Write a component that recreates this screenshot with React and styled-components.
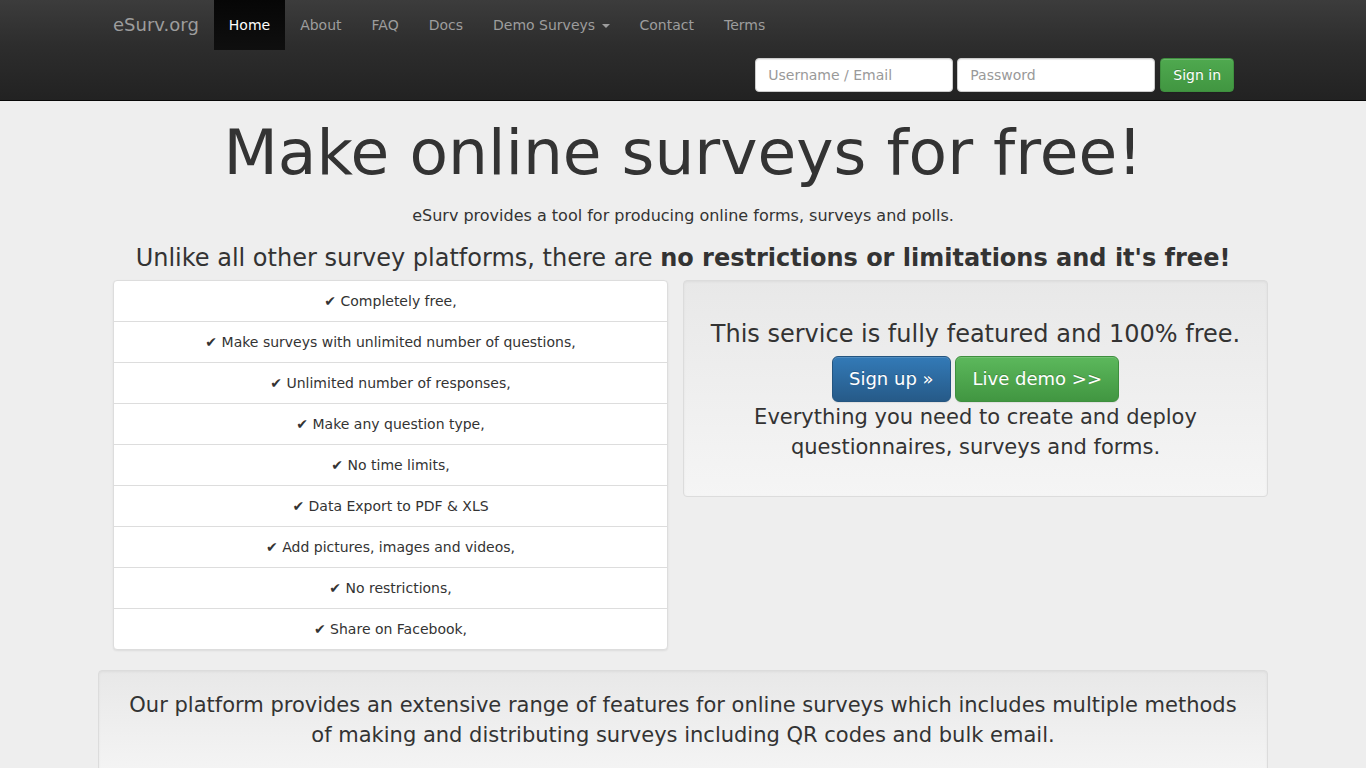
import React from "react";
import styled, { createGlobalStyle } from "styled-components";

const Global = createGlobalStyle`
  html, body { margin: 0; padding: 0; }
  body {
    background: #eeeeee;
    color: #333333;
    font-family: Verdana, "DejaVu Sans", sans-serif;
    font-size: 14px;
    line-height: 20px;
  }
  * { box-sizing: border-box; }
`;

const Navbar = styled.nav`
  height: 101px;
  background: linear-gradient(to bottom, #3c3c3c 0%, #2d2d2d 45%, #222222 100%);
  border-bottom: 1px solid #080808;
`;
const NavInner = styled.div`
  width: 1170px;
  margin: 0 auto;
`;
const NavRow = styled.div`
  display: flex;
  height: 50px;
  padding-left: 15px;
`;
const Brand = styled.a`
  font-size: 18px;
  line-height: 50px;
  color: #9d9d9d;
  padding-right: 15px;
`;
const NavLink = styled.a`
  display: block;
  height: 50px;
  padding: 15px;
  color: ${(p) => (p.$active ? "#ffffff" : "#9d9d9d")};
  background: ${(p) => (p.$active ? "linear-gradient(to bottom, #060606, #0f0f0f)" : "transparent")};
`;
const Caret = styled.span`
  display: inline-block;
  width: 0;
  height: 0;
  margin-left: 2px;
  vertical-align: middle;
  border-top: 4px solid #9d9d9d;
  border-left: 4px solid transparent;
  border-right: 4px solid transparent;
`;
const SignInForm = styled.form`
  display: flex;
  justify-content: flex-end;
  margin-top: 8px;
  padding-right: 34px;
`;
const Field = styled.input`
  width: 198px;
  height: 34px;
  margin-right: ${(p) => p.$gap}px;
  padding: 6px 12px;
  font: inherit;
  color: #555555;
  background: #ffffff;
  border: 1px solid #cccccc;
  border-radius: 4px;
  box-shadow: inset 0 1px 1px rgba(0, 0, 0, 0.075);
  &::placeholder { color: #999999; opacity: 1; }
`;
const Button = styled.button`
  display: block;
  font-family: inherit;
  color: #ffffff;
  cursor: pointer;
  height: ${(p) => (p.$large ? 46 : 34)}px;
  padding: ${(p) => (p.$large ? "10px 16.5px" : "6px 12px")};
  font-size: ${(p) => (p.$large ? 18 : 14)}px;
  line-height: ${(p) => (p.$large ? 24 : 20)}px;
  border-radius: ${(p) => (p.$large ? 6 : 4)}px;
  border: 1px solid ${(p) => (p.$blue ? "#245580" : "#3e8f3e")};
  background: ${(p) =>
    p.$blue
      ? "linear-gradient(to bottom, #337ab7 0%, #265a88 100%)"
      : p.$large
        ? "linear-gradient(to bottom, #5cb85c 0%, #419641 100%)"
        : "linear-gradient(to bottom, #4fa94f 0%, #419641 100%)"};
  text-shadow: 0 -1px 0 rgba(0, 0, 0, 0.2);
  box-shadow: inset 0 1px 0 rgba(255, 255, 255, 0.15), 0 1px 1px rgba(0, 0, 0, 0.075);
`;
const Container = styled.main`
  width: 1170px;
  margin: 0 auto;
`;
const Title = styled.h1`
  margin: 17px 0 10px;
  font-size: 63px;
  line-height: 69px;
  font-weight: 500;
  text-align: center;
`;
const Lead = styled.p`
  margin: 0;
  padding-top: 7px;
  text-align: center;
  font-size: 16px;
  line-height: 23px;
`;
const Tagline = styled.h3`
  margin: 18px 0 8px;
  text-align: center;
  font-size: 24px;
  line-height: 27px;
  font-weight: 500;
  b { font-weight: 700; }
`;
const Columns = styled.div`
  display: grid;
  grid-template-columns: 570px 585px;
  align-items: start;
  padding-left: 15px;
`;
const FeatureList = styled.ul`
  list-style: none;
  margin: 0 15px 20px 0;
  padding: 0;
  background: #ffffff;
  border: 1px solid #dddddd;
  border-radius: 4px;
  box-shadow: 0 1px 2px rgba(0, 0, 0, 0.075);
`;
const Feature = styled.li`
  height: 41px;
  padding: 10px 15px;
  text-align: center;
  border-top: ${(p) => (p.$first ? "0" : "1px solid #dddddd")};
  margin-top: ${(p) => (p.$first ? "-1px" : "0")};
  padding-top: ${(p) => (p.$first ? "11px" : "10px")};
`;
const Jumbotron = styled.section`
  padding: ${(p) => (p.$wide ? "19px 30px 30px" : "20px 15px 34px")};
  text-align: center;
  background: linear-gradient(to bottom, #e8e8e8 0%, #f5f5f5 100%);
  border: 1px solid #dcdcdc;
  border-radius: 4px;
  box-shadow: inset 0 1px 3px rgba(0, 0, 0, 0.05);
`;
const JumboHeading = styled.h3`
  margin: 20px 0 9px;
  font-size: 24px;
  line-height: 26px;
  font-weight: 500;
`;
const ButtonRow = styled.div`
  display: flex;
  justify-content: center;
  gap: 4px;
`;
const JumboText = styled.p`
  margin: 0;
  font-size: 21px;
  line-height: 30px;
  font-weight: 400;
`;

const features = [
  "Completely free,",
  "Make surveys with unlimited number of questions,",
  "Unlimited number of responses,",
  "Make any question type,",
  "No time limits,",
  "Data Export to PDF & XLS",
  "Add pictures, images and videos,",
  "No restrictions,",
  "Share on Facebook,",
];

export default function App() {
  return (
    <>
      <Global />
      <Navbar>
        <NavInner>
          <NavRow>
            <Brand>eSurv.org</Brand>
            <NavLink $active>Home</NavLink>
            <NavLink>About</NavLink>
            <NavLink>FAQ</NavLink>
            <NavLink>Docs</NavLink>
            <NavLink>Demo Surveys <Caret /></NavLink>
            <NavLink>Contact</NavLink>
            <NavLink>Terms</NavLink>
          </NavRow>
          <SignInForm>
            <Field $gap={4} placeholder="Username / Email" />
            <Field $gap={5} type="password" placeholder="Password" />
            <Button type="button">Sign in</Button>
          </SignInForm>
        </NavInner>
      </Navbar>
      <Container>
        <Title>Make online surveys for free!</Title>
        <Lead>eSurv provides a tool for producing online forms, surveys and polls.</Lead>
        <Tagline>
          Unlike all other survey platforms, there are <b>no restrictions or limitations and it's free!</b>
        </Tagline>
        <Columns>
          <FeatureList>
            {features.map((f, i) => (
              <Feature key={f} $first={i === 0}>✔ {f}</Feature>
            ))}
          </FeatureList>
          <Jumbotron>
            <JumboHeading>This service is fully featured and 100% free.</JumboHeading>
            <ButtonRow>
              <Button type="button" $large $blue>Sign up »</Button>
              <Button type="button" $large>Live demo &gt;&gt;</Button>
            </ButtonRow>
            <JumboText>Everything you need to create and deploy questionnaires, surveys and forms.</JumboText>
          </Jumbotron>
        </Columns>
        <Jumbotron $wide>
          <JumboText>
            Our platform provides an extensive range of features for online surveys which includes multiple methods of making and distributing surveys including QR codes and bulk email.
          </JumboText>
        </Jumbotron>
      </Container>
    </>
  );
}
